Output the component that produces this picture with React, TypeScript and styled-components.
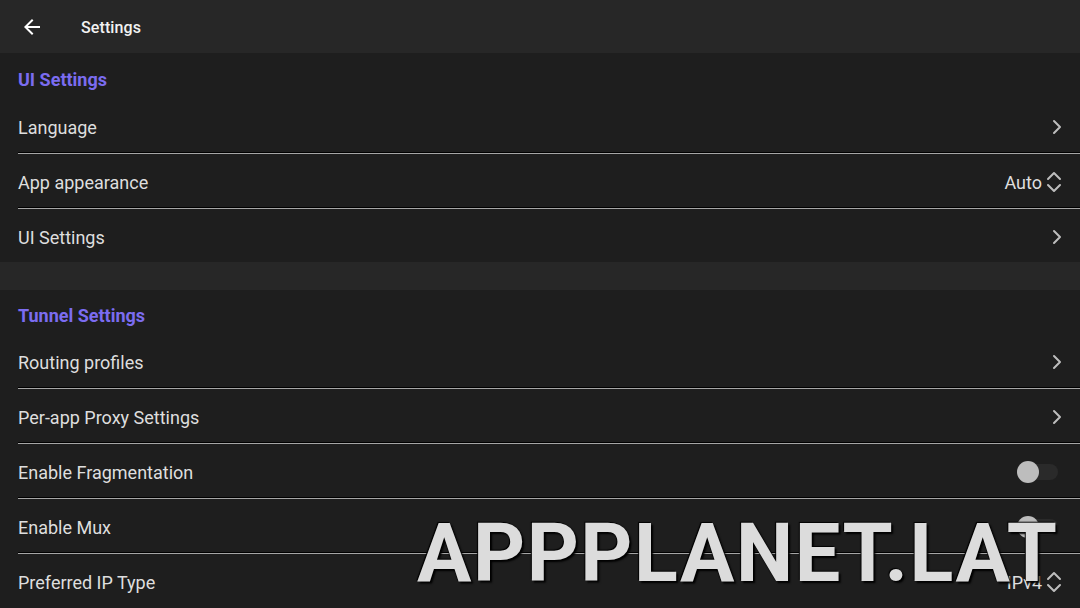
import React from "react";
import styled, { createGlobalStyle } from "styled-components";

const Global = createGlobalStyle`
  html, body { margin: 0; padding: 0; background: #1e1e1e; }
  body { font-family: Roboto, "Noto Sans", sans-serif; -webkit-font-smoothing: antialiased; }
  * { box-sizing: border-box; }
`;

const Screen = styled.div`
  position: relative;
  width: 1080px;
  height: 608px;
  overflow: hidden;
  background: #1e1e1e;
  display: flex;
  flex-direction: column;
`;

const TopBar = styled.header`
  height: 53px;
  flex: 0 0 53px;
  background: #272727;
  display: flex;
  align-items: center;
  padding: 1px 0 0 20px;
  gap: 37px;
`;

const BackButton = styled.button`
  width: 24px;
  height: 24px;
  padding: 0;
  border: 0;
  background: none;
  display: flex;
  align-items: center;
  justify-content: center;
  color: #ffffff;
`;

const Title = styled.h1`
  margin: 0;
  font-size: 16px;
  font-weight: 500;
  color: #f2f2f2;
  letter-spacing: 0.1px;
`;

const Section = styled.section`
  background: #1e1e1e;
  display: flex;
  flex-direction: column;
`;

const Spacer = styled.div`
  height: 28px;
  flex: 0 0 28px;
  background: #272727;
`;

const SectionTitle = styled.h2<{ $tight?: boolean }>`
  margin: 0;
  height: ${(p) => (p.$tight ? 44 : 46)}px;
  padding: ${(p) => (p.$tight ? 16 : 17)}px 18px 0;
  font-size: 18px;
  font-weight: 700;
  line-height: 20px;
  color: #7b6cf0;
`;

const Row = styled.div<{ $divider?: boolean }>`
  height: ${(p) => (p.$divider ? 55 : 53)}px;
  flex: 0 0 auto;
  display: flex;
  flex-direction: column;
`;

const RowBody = styled.div`
  height: 53px;
  display: flex;
  align-items: center;
  padding: 3px 18px 0;
`;

const Divider = styled.div`
  height: 2px;
  margin-left: 18px;
  background: #a6a6a6;
  border-top: 0.5px solid #000;
`;

const Label = styled.span`
  flex: 1;
  font-size: 18px;
  color: #dedede;
`;

const Value = styled.span`
  font-size: 18px;
  color: #dedede;
  margin-right: 4px;
`;

const IconBox = styled.span`
  display: flex;
  align-items: center;
  color: #bdbdbd;
`;

const Track = styled.span`
  position: relative;
  width: 38px;
  height: 16px;
  margin-right: 4px;
  border-radius: 8px;
  background: #2a2a2a;
`;

const Thumb = styled.span`
  position: absolute;
  left: -3px;
  top: -3px;
  width: 22px;
  height: 22px;
  border-radius: 50%;
  background: #bdbdbd;
`;

const Watermark = styled.div`
  position: absolute;
  left: 417px;
  top: 509px;
  font-family: Roboto, "Liberation Sans", sans-serif;
  font-weight: 700;
  font-size: 81px;
  line-height: 90px;
  letter-spacing: 1.5px;
  color: #dcdcdc;
  text-shadow: 2px 2px 2px #000, -1px -1px 1px #000;
  pointer-events: none;
  white-space: nowrap;
`;

const ArrowBack = () => (
  <svg width="24" height="24" viewBox="0 0 24 24" fill="currentColor">
    <path d="M20 11H7.83l5.59-5.59L12 4l-8 8 8 8 1.41-1.41L7.83 13H20v-2z" />
  </svg>
);

const Chevron = () => (
  <svg width="10" height="16" viewBox="0 0 10 16" fill="none" stroke="currentColor" strokeWidth="2" strokeLinecap="round" strokeLinejoin="round">
    <path d="M2 2l6 6-6 6" />
  </svg>
);

const UpDown = () => (
  <svg width="16" height="22" viewBox="0 0 16 22" fill="none" stroke="currentColor" strokeWidth="2" strokeLinecap="round" strokeLinejoin="round">
    <path d="M2 8l6-6 6 6" />
    <path d="M2 14l6 6 6-6" />
  </svg>
);

type Kind = "link" | "select" | "toggle";
type Item = { label: string; kind: Kind; value?: string };

const SettingRow = ({ item, divider }: { item: Item; divider: boolean }) => (
  <Row $divider={divider}>
    <RowBody>
      <Label>{item.label}</Label>
      {item.kind === "link" && (
        <IconBox>
          <Chevron />
        </IconBox>
      )}
      {item.kind === "select" && (
        <>
          <Value>{item.value}</Value>
          <IconBox>
            <UpDown />
          </IconBox>
        </>
      )}
      {item.kind === "toggle" && (
        <Track>
          <Thumb />
        </Track>
      )}
    </RowBody>
    {divider && <Divider />}
  </Row>
);

const groups: { title: string; items: Item[] }[] = [
  {
    title: "UI Settings",
    items: [
      { label: "Language", kind: "link" },
      { label: "App appearance", kind: "select", value: "Auto" },
      { label: "UI Settings", kind: "link" },
    ],
  },
  {
    title: "Tunnel Settings",
    items: [
      { label: "Routing profiles", kind: "link" },
      { label: "Per-app Proxy Settings", kind: "link" },
      { label: "Enable Fragmentation", kind: "toggle" },
      { label: "Enable Mux", kind: "toggle" },
      { label: "Preferred IP Type", kind: "select", value: "IPv4" },
    ],
  },
];

export default function App() {
  return (
    <>
      <Global />
      <Screen>
        <TopBar>
          <BackButton aria-label="Back">
            <ArrowBack />
          </BackButton>
          <Title>Settings</Title>
        </TopBar>
        {groups.map((g, gi) => (
          <React.Fragment key={g.title}>
            {gi > 0 && <Spacer />}
            <Section>
              <SectionTitle $tight={gi > 0}>{g.title}</SectionTitle>
              {g.items.map((it, i) => (
                <SettingRow key={it.label} item={it} divider={i < g.items.length - 1} />
              ))}
            </Section>
          </React.Fragment>
        ))}
        <Watermark>APPPLANET.LAT</Watermark>
      </Screen>
    </>
  );
}
